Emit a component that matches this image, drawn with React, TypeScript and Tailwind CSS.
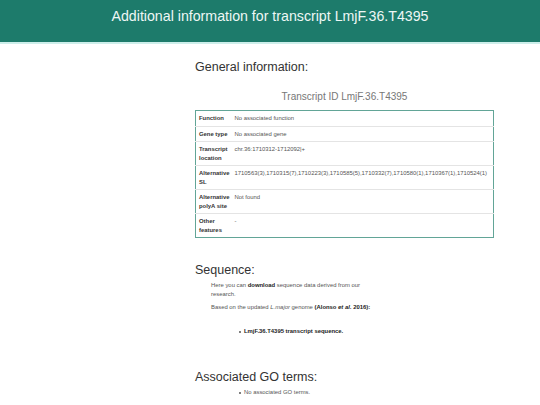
const rows: { label: string[]; value: string }[] = [
  { label: ["Function"], value: "No associated function" },
  { label: ["Gene type"], value: "No associated gene" },
  { label: ["Transcript", "location"], value: "chr.36:1710312-1712092|+" },
  {
    label: ["Alternative", "SL"],
    value:
      "1710563(3),1710315(7),1710223(3),1710585(5),1710332(7),1710580(1),1710367(1),1710524(1)",
  },
  { label: ["Alternative", "polyA site"], value: "Not found" },
  { label: ["Other", "features"], value: "-" },
];

const Bullet = ({ children }: { children: React.ReactNode }) => (
  <div className="flex items-center gap-[3px]">
    <span className="h-[2px] w-[2px] rounded-full bg-[#555]" />
    {children}
  </div>
);

export default function App() {
  return (
    <div
      className="min-h-[405px] bg-white text-[#333]"
      style={{ fontFamily: '"Liberation Sans", Arial, sans-serif' }}
    >
      <header className="flex h-[44px] items-start justify-center border-b-[2px] border-[#cdeeea] bg-[#1d7b6b]">
        <h1 className="mt-[7px] text-[14.2px] leading-[18px] text-[#eef7f5]">
          Additional information for transcript LmjF.36.T4395
        </h1>
      </header>

      <main className="ml-[195px] w-[299px] pt-[15px]">
        <h2 className="text-[12.5px] leading-[16px]">General information:</h2>

        <div className="mt-[16px] text-center text-[10px] leading-[12px] text-[#777]">
          Transcript ID LmjF.36.T4395
        </div>

        <table className="mt-[7px] w-full border-collapse border-[1.5px] border-[#62a597] text-[5.9px] leading-[8.5px]">
          <tbody>
            {rows.map((r, i) => (
              <tr key={r.label.join(" ")} className={i > 0 ? "border-t border-[#e4e4e4]" : ""}>
                <td className="w-[38px] px-[3px] py-[3px] align-top font-bold text-[#333]">
                  {r.label.map((l) => (
                    <div key={l}>{l}</div>
                  ))}
                </td>
                <td className="whitespace-nowrap py-[3px] pl-[1px] align-top text-[#555]">
                  {r.value}
                </td>
              </tr>
            ))}
          </tbody>
        </table>

        <h2 className="mt-[24px] text-[12.5px] leading-[16px]">Sequence:</h2>
        <div className="ml-[16px] mt-[3px] w-[165px] text-[5.9px] leading-[9px] text-[#555]">
          <p>
            Here you can <b className="text-[#222]">download</b> sequence data derived from our
            research.
          </p>
          <p className="mt-[4px]">
            Based on the updated <i>L.major</i> genome{" "}
            <b className="text-[#222]">
              (Alonso <i>et al.</i> 2016):
            </b>
          </p>
        </div>
        <div className="ml-[44px] mt-[15px] text-[5.9px] leading-[9px] font-bold text-[#222]">
          <Bullet>LmjF.36.T4395 transcript sequence.</Bullet>
        </div>

        <h2 className="mt-[33px] text-[12.5px] leading-[16px]">Associated GO terms:</h2>
        <div className="ml-[44px] mt-[3px] text-[5.9px] leading-[9px] text-[#555]">
          <Bullet>No associated GO terms.</Bullet>
        </div>
      </main>
    </div>
  );
}
